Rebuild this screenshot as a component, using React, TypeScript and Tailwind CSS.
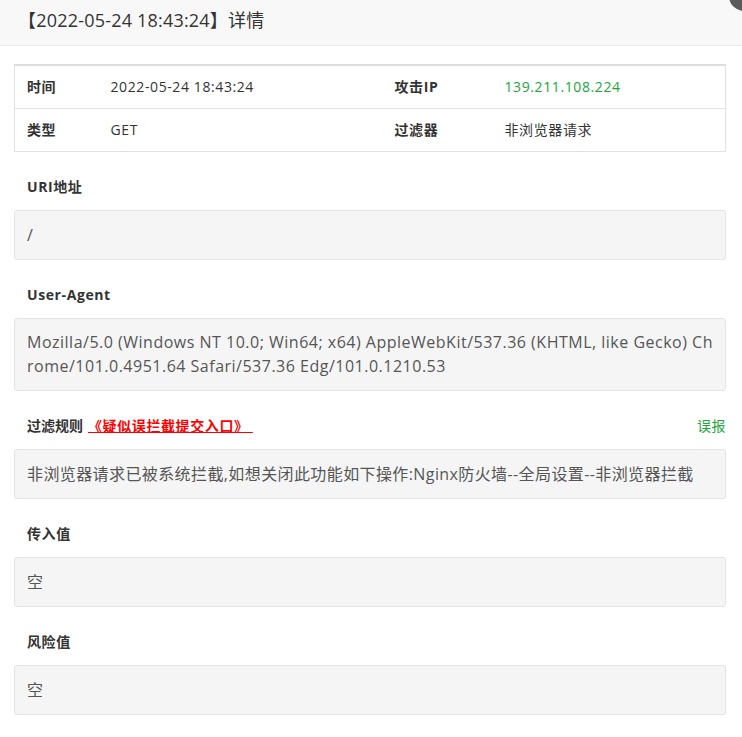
import React from "react";

const font = { fontFamily: '"Open Sans", "Noto Sans CJK SC", sans-serif' };

interface InfoRow {
  label: string;
  value: string;
  label2: string;
  value2: string;
  green?: boolean;
}

const rows: InfoRow[] = [
  { label: "时间", value: "2022-05-24 18:43:24", label2: "攻击IP", value2: "139.211.108.224", green: true },
  { label: "类型", value: "GET", label2: "过滤器", value2: "非浏览器请求" },
];

const Section = ({ title, extra, children, boxClass = "py-[12px] tracking-[0.4px]" }: { title: React.ReactNode; extra?: React.ReactNode; children: React.ReactNode; boxClass?: string }) => (
  <div>
    <div className="mt-[25px] mb-[13px] h-[20px] flex items-center justify-between pl-[13px]">
      <div className="text-[14px] font-bold text-[#333] leading-[20px] tracking-[0.6px]">{title}</div>
      {extra}
    </div>
    <div className={`bg-[#f5f5f5] border border-[#e4e4e4] rounded-[3px] px-[12px] text-[16px] leading-[24px] text-[#555] break-all ${boxClass}`}>
      {children}
    </div>
  </div>
);

export default function App() {
  return (
    <div className="relative w-[742px] h-[737px] bg-white overflow-hidden" style={font}>
      {/* Header */}
      <div className="h-[46px] bg-[#f8f8f8] border-b border-[#eeeeee] flex items-center pl-[18px] pb-[4px]">
        <h1 className="text-[18px] text-[#333] font-normal tracking-[0.2px]">【2022-05-24 18:43:24】详情</h1>
      </div>
      {/* close button, mostly off-screen */}
      <div className="absolute right-[-17px] top-[-19px] w-[30px] h-[30px] rounded-full bg-[#5a5a5a]" />

      <div className="pl-[14px] pr-[16px] pt-[18px]">
        <table className="w-full border-collapse text-[14px] text-[#333] table-fixed tracking-[0.6px]">
          <colgroup>
            <col className="w-[84px]" />
            <col className="w-[284px]" />
            <col className="w-[110px]" />
            <col />
          </colgroup>
          <tbody>
            {rows.map((r, i) => (
              <tr key={r.label} className={`h-[43px] border-x border-b border-[#e2e2e2] ${i === 0 ? "border-t-2 border-t-[#dddddd]" : ""}`}>
                <td className="pl-[12px] font-bold">{r.label}</td>
                <td className="pl-[12px]">{r.value}</td>
                <td className="pl-[12px] font-bold">{r.label2}</td>
                <td className="pl-[12px]">
                  <span className={r.green ? "text-[#20a53a]" : ""}>{r.value2}</span>
                </td>
              </tr>
            ))}
          </tbody>
        </table>

        <Section title="URI地址">/</Section>

        <Section title="User-Agent" boxClass="pt-[11px] pb-[12px] tracking-[0.5px]">
          Mozilla/5.0 (Windows NT 10.0; Win64; x64) AppleWebKit/537.36 (KHTML, like Gecko) Chrome/101.0.4951.64 Safari/537.36 Edg/101.0.1210.53
        </Section>

        <Section
          title={
            <span className="flex items-center">
              <span className="tracking-normal">过滤规则</span>
              <a href="#" className="ml-[5px] text-[#ff0000] underline tracking-[0.6px]">《疑似误拦截提交入口》&nbsp;</a>
            </span>
          }
          extra={<a href="#" className="text-[14px] text-[#20a53a] tracking-[0.5px]">误报</a>}
        >
          非浏览器请求已被系统拦截,如想关闭此功能如下操作:Nginx防火墙--全局设置--非浏览器拦截
        </Section>

        <Section title="传入值">空</Section>

        <Section title="风险值">空</Section>
      </div>
    </div>
  );
}
